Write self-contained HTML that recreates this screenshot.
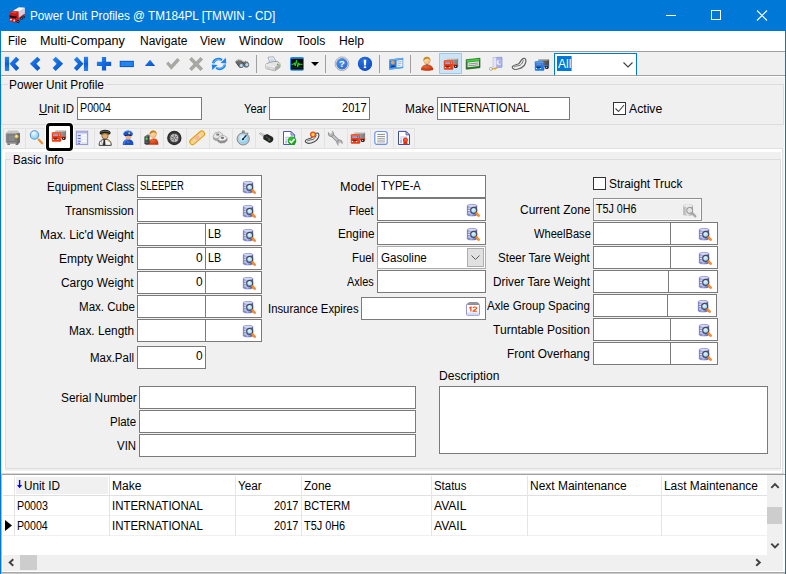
<!DOCTYPE html><html><head><meta charset="utf-8"><title>Power Unit Profiles</title><style>
*{box-sizing:border-box;margin:0;padding:0}
html,body{width:786px;height:574px;overflow:hidden;background:#f0f0f0}
body{font-family:"Liberation Sans",sans-serif;font-size:12px;color:#000;position:relative}
#win{position:absolute;left:0;top:0;width:786px;height:574px;background:#f0f0f0;overflow:hidden}
.abs{position:absolute}
svg{position:absolute;overflow:visible}
.t{position:absolute;white-space:nowrap;line-height:14px;height:14px;transform-origin:0 0}
.in{position:absolute;background:#fff;border:1px solid #7a7a7a}
.dis{position:absolute;background:#f0f0f0;border:1px solid #8e8e8e;box-shadow:inset 0 0 0 1px #fafafa}
.gb{position:absolute;border:1px solid #dcdcdc}
</style></head><body><div id="win">
<svg width="0" height="0" style="position:absolute"><defs>
<linearGradient id="gb" x1="0" y1="0" x2="1" y2="1"><stop offset="0" stop-color="#2f8cf2"/><stop offset=".5" stop-color="#1268dc"/><stop offset="1" stop-color="#0a4fb8"/></linearGradient>
<linearGradient id="gbv" x1="0" y1="0" x2="0" y2="1"><stop offset="0" stop-color="#2a86ee"/><stop offset=".5" stop-color="#0d5fd4"/><stop offset="1" stop-color="#2a86ee"/></linearGradient>
<linearGradient id="gcyl" x1="0" y1="0" x2="1" y2="0"><stop offset="0" stop-color="#5c66b4"/><stop offset=".4" stop-color="#b8c0ea"/><stop offset="1" stop-color="#3e4898"/></linearGradient>
<linearGradient id="gcyd" x1="0" y1="0" x2="1" y2="0"><stop offset="0" stop-color="#acacac"/><stop offset=".45" stop-color="#e4e4e4"/><stop offset="1" stop-color="#9c9c9c"/></linearGradient>
<linearGradient id="gbox" x1="0" y1="0" x2="1" y2="0"><stop offset="0" stop-color="#b8b8b8"/><stop offset="1" stop-color="#7c7c7c"/></linearGradient>
<linearGradient id="gboxd" x1="0" y1="0" x2="1" y2="0"><stop offset="0" stop-color="#8a8a8a"/><stop offset="1" stop-color="#444"/></linearGradient>
<radialGradient id="glens" cx=".4" cy=".35" r=".7"><stop offset="0" stop-color="#e8f8ff"/><stop offset="1" stop-color="#7cc8f4"/></radialGradient>
<radialGradient id="gred" cx=".4" cy=".3" r=".8"><stop offset="0" stop-color="#f0682c"/><stop offset="1" stop-color="#b82c0c"/></radialGradient>
<radialGradient id="gblu" cx=".4" cy=".3" r=".8"><stop offset="0" stop-color="#4a90f0"/><stop offset="1" stop-color="#0c3cb0"/></radialGradient>
<radialGradient id="gface" cx=".4" cy=".4" r=".7"><stop offset="0" stop-color="#fde0b0"/><stop offset="1" stop-color="#e8a868"/></radialGradient>

<g id="n-first"><path d="M.9 .8h4.200v14.200h-4.200z" fill="url(#gbv)"/><path d="M12.100 .7l3.100 3.100l-4 4l4 4.100l-3.100 3.100l-6.600-7.200z" fill="url(#gb)"/></g>
<g id="n-prev"><path d="M10.300 .7l3.100 3.100l-4 4l4 4.100l-3.100 3.100l-7.400-7.200z" fill="url(#gb)"/></g>
<g id="n-next"><path d="M5.700 .7l-3.100 3.100l4 4l-4 4.100l3.100 3.100l7.400-7.200z" fill="url(#gb)"/></g>
<g id="n-last"><path d="M10.900 .8h4.200v14.200h-4.200z" fill="url(#gbv)"/><path d="M3.900 .7l-3.100 3.100l4 4l-4 4.100l3.100 3.100l6.600-7.200z" fill="url(#gb)"/></g>
<g id="n-plus"><path d="M5.900 1h4.200v4.700h5.100v4.200h-5.100v4.700h-4.200v-4.700h-5v-4.200h5z" fill="url(#gb)"/></g>
<g id="n-minus"><path d="M.7 4.800h14.200v6.300h-14.200z" fill="#0d58c8"/><path d="M1.700 5.800h12.200v4.300h-12.200z" fill="#2484ee"/></g>
<g id="n-up"><path d="M8 3.700l5.200 6.200h-10.400z" fill="url(#gb)"/></g>
<g id="n-check"><path d="M1.100 7.700l2.300-2.200l2.700 3.300l6.200-6.900l2.700 2.400l-8.700 9.500z" fill="#a9a7a3"/></g>
<g id="n-x"><path d="M1.100 3.600l2.600-2.600l4.400 4.400l4.400-4.400l2.600 2.600l-4.400 4.400l4.400 4.400l-2.600 2.500l-4.400-4.300l-4.400 4.300l-2.600-2.500l4.400-4.400z" fill="#a9a7a3"/></g>
<g id="n-refresh"><path d="M2.300 7.400c.3-3.300 4.600-6 8.600-3.300" stroke="#1c84ee" stroke-width="2.500" fill="none"/><path d="M9.600 6.900l5.700.5l-.5-5.600z" fill="#1c84ee"/><path d="M13.800 8.500c-.3 3.300-4.600 6-8.600 3.300" stroke="#1c84ee" stroke-width="2.500" fill="none"/><path d="M6.500 9l-5.700-.5l.5 5.600z" fill="#1c84ee"/><path d="M2.800 6.600c.8-2.400 4.300-4 7.300-2.200M13.300 9.300c-.8 2.400-4.300 4-7.300 2.200" stroke="#86c8fc" stroke-width=".9" fill="none"/></g>
<g id="n-binoc"><path d="M1.200 5.400l2.700-2l3.700.5l1.300 1.400l2.800-.6l2.300 1.200l1.200 3.700l-1.600 2l-2.800-.2l-1.300-1.400l-1 1.800l-2.600.2l-1.900-1.700z" fill="#6c6c6c"/><path d="M2.400 5l2-1.200l3.200.5l1.200 1.500l2.700-.6l1.800.9" stroke="#c4c4c4" stroke-width=".9" fill="none"/><path d="M2 6.500l3.300 3.600M7.500 5.500l3 3.200" stroke="#3c3c3c" stroke-width=".8"/><circle cx="7.300" cy="9.500" r="2" fill="#b4dcfa" stroke="#4a4a4a" stroke-width=".6"/><circle cx="12.800" cy="8.700" r="2" fill="#b4dcfa" stroke="#4a4a4a" stroke-width=".6"/></g>

<g id="i-truckred"><path d="M4 4.200l1.200-1.200h9l.9.700v5.800h-11.100z" fill="url(#gbox)"/><path d="M4 4.200l1.200-1.200h9l.9.700l-1 .700h-9z" fill="#d4d4d4"/><path d="M10 9.200h5.100v1.600l-1 .5h-4.100z" fill="#e03018"/><ellipse cx="12.800" cy="11.500" rx="1.900" ry="1.500" fill="#1c1010"/><ellipse cx="12.600" cy="11.300" rx=".8" ry=".6" fill="#d8d8d8"/><path d="M8.500 12.200h1.800v1.400l-.6.600h-1.200z" fill="#221410"/><path d="M.8 6.300l.9-1.200h7.300l.9 1.200v7.600l-.7.800h-7.700l-.7-.8z" fill="#e8401c"/><path d="M1.200 5.900l.6-.7h7l.7.700v1h-8.300z" fill="#f2643a"/><path d="M2.200 7.200h4.900v1.800h-4.900zM8 7.200h1.100v1.800h-1.100z" fill="#8ea8e4"/><path d="M2.600 10.800h4v1h-4z" fill="#5a1a10"/><path d="M1.800 12.100h1.300v.9h-1.300zM5.900 12.100h1.300v.9h-1.300z" fill="#fff4ec"/></g>
<g id="i-truckblue"><path d="M4 4.200l1.200-1.200h9l.9.700v5.800h-11.100z" fill="url(#gboxd)"/><path d="M4 4.200l1.200-1.200h9l.9.700l-1 .700h-9z" fill="#b0b0b0"/><path d="M10 9.200h5.100v1.600l-1 .5h-4.100z" fill="#1668d8"/><ellipse cx="12.800" cy="11.500" rx="1.900" ry="1.500" fill="#1c1010"/><ellipse cx="12.600" cy="11.300" rx=".8" ry=".6" fill="#d8d8d8"/><path d="M8.500 12.200h1.800v1.400l-.6.600h-1.200z" fill="#221410"/><path d="M.8 6.300l.9-1.200h7.300l.9 1.200v7.600l-.7.800h-7.700l-.7-.8z" fill="#1c7ce8"/><path d="M1.200 5.900l.6-.7h7l.7.700v1h-8.300z" fill="#4aa0f4"/><path d="M2.200 7.200h4.900v1.800h-4.900zM8 7.200h1.100v1.800h-1.100z" fill="#7484c4"/><path d="M2.600 10.800h4v1h-4z" fill="#0c1420"/><path d="M1.800 12.100h1.300v.9h-1.300zM5.900 12.100h1.300v.9h-1.300z" fill="#d8f0ff"/></g>
<g id="i-trucktitle"><path d="M4.200 3.800l5.500-3.300l6 .3v6.500l-6.500 5z" fill="#dcdce8"/><path d="M4.200 3.800l5.500-3.300l6 .3l-5.500 3.500z" fill="#fafafa"/><path d="M10.200 4.300l5.500-3.500v6.500l-5.500 4.200z" fill="#cfcfe0"/><path d="M9.500 11l6.200-4.600v1.500l-6.200 4.700z" fill="#c41c1c"/><path d="M.3 8.500l1-3.300l3.300-1.400l5 .6l.2 7.500l-2.800 3.800l-5.500-1.200l-1.200-2.500z" fill="#d01a1a"/><path d="M1.600 5.600l3-1.300l4 .5l-2.600 1.600z" fill="#ee4a3a"/><path d="M.6 8.300l5.800 1.300l1-1l.2 1.800l-1.200 1.200l-6-1.400z" fill="#141414"/><circle cx="2" cy="12.600" r=".9" fill="#fff"/><circle cx="5.200" cy="13.500" r=".9" fill="#f4f4ff"/><circle cx="9" cy="14.500" r="1.500" fill="#141414"/><circle cx="12.500" cy="11.500" r="1.300" fill="#141414"/><circle cx="14.600" cy="10" r="1.200" fill="#141414"/><circle cx="9" cy="14.500" r=".5" fill="#ddd"/><circle cx="12.500" cy="11.500" r=".45" fill="#ddd"/><circle cx="14.600" cy="10" r=".4" fill="#ddd"/></g>
<g id="i-printer"><path d="M3 1.200l5.500-.4l2.800 5.200l-6.300 1z" fill="#f4f8fc" stroke="#8a9098" stroke-width=".7"/><path d="M4.600 2.600l3.500-.3l1.500 2.800l-3.800.5z" fill="#c4dcf2"/><path d="M1 8.200l3.500-2l7.500-1l3 2.300v3.800l-5 3.500l-9-2.300z" fill="#e4e4e4" stroke="#7c7c7c" stroke-width=".7"/><path d="M1 8.200l9 2.300l5-3v3.800l-5 3.500z" fill="#acacac"/><path d="M1 8.200l9 2.300v4.300l-9-2.300z" fill="#e8e8e8"/><path d="M2 10.800l7.200 1.800v1.400l-7.200-1.800z" fill="#fdfdfd" stroke="#9c9c9c" stroke-width=".5"/><path d="M1 8.200l9 2.300l5-3" stroke="#fafafa" stroke-width=".6" fill="none"/><circle cx="12.800" cy="8.400" r=".9" fill="#38c838"/></g>
<g id="i-monitor"><rect x="1" y=".9" width="14" height="13.800" rx="1.800" fill="#1e8cf8"/><rect x="2" y="2.800" width="12" height="10.700" fill="#040c04"/><path d="M2.500 8.300h2l.8-1.500l.9 3l1.200-5.500l1.300 6.500l1.100-4l.9 2.200l.8-.7h2" stroke="#30e030" stroke-width="1" fill="none"/><path d="M3 11.500h10" stroke="#124812" stroke-width=".6"/></g>
<g id="i-help"><circle cx="8" cy="7.800" r="6.900" fill="#d8dade" stroke="#8c8c90" stroke-width=".6"/><circle cx="8" cy="7.800" r="5.500" fill="url(#gblu)"/><circle cx="8" cy="7.800" r="5.500" fill="#4a96ec" opacity=".55"/><text x="8" y="11.200" font-family="Liberation Sans" font-weight="bold" font-size="9.500" text-anchor="middle" fill="#fff">?</text></g>
<g id="i-info"><circle cx="8" cy="7.800" r="7.100" fill="url(#gblu)"/><circle cx="8" cy="7.800" r="7.100" fill="#0c56d0" opacity=".5"/><path d="M6.700 3.700h2.600l-.45 5.800h-1.700z" fill="#fff"/><ellipse cx="8" cy="11.300" rx="1.350" ry="1.050" fill="#fff"/></g>
<g id="i-card"><path d="M1.200 3.600l14-1.900v10.400l-14 1.700z" fill="#2c80e8"/><path d="M1.200 3.600l14-1.900v1.500l-14 1.900z" fill="#68acf6"/><path d="M8.600 4.500l6-.8v7.200l-6 .8z" fill="#f0f2f6"/><path d="M9.500 6l4.200-.5M9.500 7.800l4.200-.5M9.500 9.600l3-.4" stroke="#a8acb8" stroke-width=".8"/><circle cx="4.800" cy="6.600" r="1.900" fill="#f0a040"/><path d="M2.300 11.600c.2-3 4.800-3.300 5.200-.5z" fill="#1c3c98"/><path d="M1.200 12.300l14-1.700v1.500l-14 1.700z" fill="#58a4f4"/></g>
<g id="i-person"><path d="M2 14c-.5-7.500 12.700-7.500 12.200 0c-3 .9-9 .9-12.200 0z" fill="url(#gred)"/><circle cx="7.900" cy="4.700" r="3.500" fill="url(#gface)"/><path d="M4.300 5c-.6-5.600 7.800-5.600 7.200 0c-.6-1.600-1.400-2.300-2.600-2.500c-1.800.5-3.600.6-4.600 2.500z" fill="#c4861c"/><path d="M6.900 8.200h2.200l-.5 1.800h-1.200z" fill="#56688c"/></g>
<g id="i-ticket"><path d="M1.200 3.700l13.800-1.400v9.400l-13.800 1.500z" fill="#1c8c1c" stroke="#1c3c1c" stroke-width=".6"/><path d="M1.700 4l12.800-1.300v1.900l-12.800 1.300z" fill="#38d838"/><path d="M2.600 6.500l11.300-1.200v4.800l-11.300 1.200z" fill="#ececec"/><path d="M3.400 8l9.700-1M3.400 9.800l9.700-1" stroke="#8c8c8c" stroke-width="1"/></g>
<g id="i-dockey"><path d="M5.200 1.600l8.800-.4v10l-8.800.8z" fill="#aab0e8" stroke="#8288cc" stroke-width=".6"/><path d="M5.200 1.600l3-.1v10.200l-3 .3z" fill="#e4e6f8"/><circle cx="11" cy="6.500" r="2.400" fill="#f0f2fc"/><circle cx="12" cy="6.100" r="1.800" fill="#aab0e8"/><path d="M3.500 12.400l5.800-1l.3 1l-1.600.4l.2.700l-1.300.3l-.2-.6l-2.800.6z" fill="#f0a800"/><circle cx="2.900" cy="12.900" r="1.500" fill="#f4f4f4" stroke="#9a9a9a" stroke-width=".7"/></g>
<g id="i-clip"><path d="M2 12.600c-2.500-2.600 2-3.600 5.200-4.600c2-.7 2.300-4.300 4.800-5.400c3-1.200 3.400 2 2.400 4.600c-1 2.800-3.500 4.600-6.400 5.600c-2.400.8-4.800 1-6-.2z" fill="#f0f0f0" stroke="#606060" stroke-width="1.200"/><path d="M3.200 11c1.500-1.300 4.500-1 6-1.800c1.600-.9 2.600-3.300 3.100-5" stroke="#6a6a6a" stroke-width="1" fill="none"/></g>

<g id="i-safe"><path d="M.8 4.200l2.600-2.600h9.400l2.200 2.600z" fill="#c4c4c4"/><path d="M.8 4.200h14.200v9l-1.600 1.600h-11l-1.600-1.600z" fill="#8c8c8c"/><path d="M11.500 4.200h3.500v9l-1.600 1.600h-1.900z" fill="#6c6c6c"/><path d="M2.600 5.500h8v7.500h-8z" fill="#707070"/><path d="M3.400 6.300h6.400v5.900h-6.400z" fill="#8a8a8a"/><circle cx="11.600" cy="7.400" r="1.900" fill="#f0c030"/><circle cx="11.400" cy="7.200" r=".9" fill="#fff0a0"/><path d="M2.400 14.800h2.600v1h-2.600zM10.600 14.800h2.600v1h-2.600z" fill="#4a4a4a"/></g>
<g id="i-mag"><circle cx="6.500" cy="6" r="4.200" fill="url(#glens)" stroke="#5c98cc" stroke-width="1.100"/><path d="M4.300 4.300c.9-1.200 2.300-1.400 3.300-.9" stroke="#fff" stroke-width=".9" fill="none"/><path d="M9.600 9.300l1.500 1.500" stroke="#8c8c8c" stroke-width="1.600"/><path d="M10.700 10.400l3.400 3.800" stroke="#dcdcdc" stroke-width="3" stroke-linecap="round"/><path d="M11 10.800l3 3.400" stroke="#f08a1c" stroke-width="2" stroke-linecap="round"/></g>
<g id="i-form"><rect x="2.300" y="2.200" width="11.400" height="13.400" fill="#dfe2f8" stroke="#8a8ccc" stroke-width=".9"/><path d="M2.800 2.700h10.400v1.500h-10.400z" fill="#b0b4e4"/><path d="M7.400 5.600h5.300v1.800h-5.300zM7.400 8.400h5.300v1.800h-5.300zM7.400 11.200h5.300v1.800h-5.300z" fill="#fdfdff"/><path d="M3.800 6.600h2.900M3.800 9.400h2.900M3.800 12.200h2.900M3.800 14.300h2.200" stroke="#4454b4" stroke-width=".9"/></g>
<g id="i-pilot"><path d="M2.200 16.400c-.3-4.500 2.500-6 6-6c3.500 0 6.300 1.500 6 6z" fill="#f6f6f6" stroke="#2e2e2e" stroke-width=".9"/><path d="M6.600 10.600h1.500l.4 5.600h-2.600z" fill="#2a2a2a"/><path d="M4.300 12l1.300 4" stroke="#8a8a8a" stroke-width=".7"/><path d="M11 10.900l2.400 1.500l-.5 1.100l-2.400-1.400z" fill="#e8b020"/><circle cx="8" cy="6.800" r="3.200" fill="#e0ac74" stroke="#5a3a1a" stroke-width=".6"/><path d="M2.600 3.700c.6-3.800 10.400-3.800 11 0c.2 1-1 1.600-1.800 2c-2.400-.9-5-.9-7.400 0c-.8-.4-2-1-1.800-2z" fill="#1c1c1c"/><path d="M3.400 3.200c2.600-1.400 6.600-1.400 9.200 0" stroke="#8c8c8c" stroke-width=".7" fill="none"/><path d="M4.600 5.200c2.200-.8 4.800-.8 7 0" stroke="#d8a820" stroke-width=".8" fill="none"/></g>
<g id="i-police"><path d="M2.800 16c-.3-4.500 2.200-5.800 5.300-5.800c3.100 0 5.600 1.300 5.300 5.800z" fill="#1c50c8"/><path d="M4 15.500c0-3 1.500-4.300 3.600-4.600" stroke="#4c84ec" stroke-width="1.200" fill="none"/><circle cx="8.300" cy="7.400" r="3" fill="#e8b080"/><path d="M3.400 5.400c-.5-4.800 9.900-4.800 9.400 0c-.1.900-1 1.400-1.500 1.500c-2.200-1-4.400-1-6.400 0c-.5-.1-1.400-.6-1.500-1.500z" fill="#1c54d0"/><path d="M4.200 3.300c1.800-1.800 6-1.800 7.800 0" stroke="#5c94f0" stroke-width="1" fill="none"/><path d="M5 6.700c2-.9 4.600-.9 6.400 0" stroke="#0c1c58" stroke-width="1.100" fill="none"/><circle cx="9.200" cy="4.200" r="1" fill="#f0d040"/><circle cx="8" cy="13" r=".6" fill="#f0d040"/></g>
<g id="i-phone"><path d="M5.200 15.800c-.3-5 3.500-6.200 5.800-6.200c2.400 0 4.600 1.700 4.300 6.200z" fill="url(#gred)"/><circle cx="10.200" cy="5.600" r="3.400" fill="url(#gface)"/><path d="M6.600 5.800c-.8-5.800 8-5.800 7.200 0c-.6-1.500-1.200-2.400-2.300-2.600c-1.900.5-3.700.6-4.900 2.600z" fill="#c4821c"/><path d="M1.400 7.800l3.600-2.200l1.600 1v8.200l-2.400 1.200l-2.800-1z" fill="#3e4048"/><path d="M1.400 7.800l3.600-2.200l1.600 1l-3.400 2z" fill="#6c6e78"/><circle cx="3.600" cy="9.800" r="1.200" fill="#48dc3c"/><path d="M2.300 12h2.600M2.300 13.500h2.600" stroke="#6c6e78" stroke-width=".7"/></g>
<g id="i-tire"><circle cx="8.300" cy="9" r="7.200" fill="#2c2c2c"/><circle cx="8.300" cy="9" r="5.600" fill="#444"/><circle cx="8.300" cy="9" r="4" fill="#c4c4c4"/><path d="M8.300 5.400v7.200M4.900 7.900l6.800 2.200M5.400 11l5.800-4" stroke="#5a5a5a" stroke-width=".9"/><circle cx="8.300" cy="9" r="1.100" fill="#ececec" stroke="#5a5a5a" stroke-width=".5"/></g>
<g id="i-bandaid"><g transform="translate(8.200 8.800) rotate(-41)"><rect x="-8.800" y="-2.700" width="17.600" height="5.400" rx="2.700" fill="#f8dca4" stroke="#e0a010" stroke-width="1.200"/><rect x="-2.600" y="-2.100" width="5.200" height="4.200" fill="#f2b8a0"/><path d="M-7 -1h3M-7 1h3M4 -1h3M4 1h3" stroke="#e8b44c" stroke-width=".6"/></g></g>
<g id="i-nuts"><path d="M1 7.400l2.200-3.600l4.400-.9l3 2.200v2.800l-2.400 2.800l-4.400.6z" fill="#e8e8e8" stroke="#8c8c8c" stroke-width=".6"/><path d="M1 7.400l2.800 1.900l4.400-.6l2.400-2.800v2.800l-2.400 2.800l-4.400.6l-2.800-1.900z" fill="#a8a8a8"/><ellipse cx="5.800" cy="5.600" rx="1.700" ry="1.100" fill="#7c7c7c"/><path d="M5.800 10.200l2-3l4.400-.6l2.900 2v2.800l-2.300 2.300l-4.400.4l-2.600-1.500z" fill="#efefef" stroke="#8c8c8c" stroke-width=".6"/><path d="M5.800 10.200l2.600 1.500l4.400-.4l2.300-2.300v2.400l-2.300 2.300l-4.400.4l-2.600-1.500z" fill="#8c8c8c"/><ellipse cx="10.400" cy="8.900" rx="1.800" ry="1.100" fill="#7a7a7a"/></g>
<g id="i-stopwatch"><path d="M6.900 1.500h2.800v2.700h-2.800z" fill="#8c8c8c"/><path d="M12 3.200l1.600 1.300l-1 1.200l-1.500-1.300z" fill="#8c8c8c"/><circle cx="8.200" cy="9.900" r="6.100" fill="#c4c8cc" stroke="#70767c" stroke-width=".8"/><circle cx="8.200" cy="9.900" r="4.700" fill="url(#glens)"/><path d="M7.700 10.400l3.300-3.800" stroke="#1c242c" stroke-width="1.300" stroke-linecap="round"/><circle cx="7.900" cy="10.200" r="1" fill="#1c242c"/></g>
<g id="i-key"><path d="M1.200 4.600l1.300-.8l6.500 3.400l-1.200 2.200z" fill="#d8d8d8" stroke="#8a8a8a" stroke-width=".5"/><path d="M5.600 6.400l3.600-1.300l5 2.600c1.700 1.200 1.500 3.700-.4 5.200l-2.200 1.100l-6.400-3.900z" fill="#242424"/><path d="M7.500 7.600l5 2.900" stroke="#6a6a6a" stroke-width=".8"/><circle cx="11" cy="11" r=".8" fill="#30b030"/></g>
<g id="i-doccheck"><path d="M2.500 2.500h7.500l3.600 3.600v9.400h-11.100z" fill="#fff" stroke="#4c5cac" stroke-width="1"/><path d="M10 2.500v3.600h3.600z" fill="#c4ccf0" stroke="#4c5cac" stroke-width=".8"/><path d="M4.200 8.300h5M4.200 10.300h2.500" stroke="#b0b8e8" stroke-width="1"/><path d="M4.200 11.500h2v3h-2z" fill="#b0b8f0"/><circle cx="11" cy="11.800" r="4.300" fill="#18a418"/><circle cx="10.400" cy="10.800" r="3" fill="#3cc43c" opacity=".7"/><path d="M8.500 11.800l1.900 1.900l3.200-3.700" stroke="#fff" stroke-width="1.600" fill="none"/></g>
<g id="i-clipsun"><path d="M2 13.400c-2.500-2.400 2-3.400 5.200-4.400c2-.7 2.300-3.800 4.800-4.800c3-1.100 3.400 1.800 2.400 4.300c-1 2.600-3.500 4.300-6.400 5.200c-2.400.8-4.800.9-6-.3z" fill="#ececec" stroke="#4a4a4a" stroke-width="1.100"/><path d="M3.200 12c1.500-1.200 4.500-.9 6-1.700c1.600-.8 2.600-3 3.100-4.600" stroke="#5a5a5a" stroke-width="1" fill="none"/><circle cx="9" cy="5.500" r="3" fill="#f04820"/><circle cx="9" cy="5.500" r="1.700" fill="#fcd838"/></g>
<g id="i-wrench"><path d="M4.500 5.500l7.500 7.500" stroke="#8a8a8a" stroke-width="3.400" stroke-linecap="round"/><path d="M4.500 5.500l7.500 7.500" stroke="#c4c4c4" stroke-width="2" stroke-linecap="round"/><circle cx="4" cy="4.800" r="2.700" fill="#b8b8b8" stroke="#808080" stroke-width=".7"/><path d="M.5 2.300l3.200 2.800l1.800-2.200l-2.500-2.900z" fill="#f0f0f0"/><circle cx="12.600" cy="13.600" r="2.700" fill="#b8b8b8" stroke="#808080" stroke-width=".7"/><path d="M16.200 16l-3.200-2.800l-1.800 2.200l2.500 2.900z" fill="#f0f0f0"/></g>
<g id="i-lines"><rect x="1.800" y="2.500" width="12.400" height="12.900" rx="2.200" fill="#fff" stroke="#6c90e4" stroke-width="1.200"/><path d="M4.200 5.400h7.800M4.200 7.600h7.800M4.200 9.800h7.800M4.200 12h7.800" stroke="#707070" stroke-width=".8"/><path d="M4.200 13.800h7.800" stroke="#9a9a9a" stroke-width=".6"/></g>
<g id="i-docribbon"><path d="M2.500 2.400h7.500l3.500 3.500v9.600h-11z" fill="#fff" stroke="#3c4c98" stroke-width="1"/><path d="M10 2.400v3.500h3.500z" fill="#c4ccf0" stroke="#3c4c98" stroke-width=".8"/><path d="M4.200 8h7M4.200 9.800h2" stroke="#b0b8e8" stroke-width=".9"/><path d="M4.200 10.800h1.800v3.400h-1.800z" fill="#b0b8f0"/><path d="M7.800 12.300l-.9 3.700l2.500-1.200l2.500 1.200l-.9-3.700z" fill="#e02c0c"/><circle cx="9.400" cy="10.900" r="2.500" fill="#ea340e"/><circle cx="9.400" cy="10.900" r="1.100" fill="#f8684c"/></g>

<g id="i-look"><path d="M.3 1.700c0-1.700 9.600-1.700 9.600 0v9c0 1.700-9.600 1.700-9.600 0z" fill="url(#gcyl)"/><path d="M.3 1.700c0-1.700 9.600-1.700 9.600 0v9c0 1.700-9.600 1.700-9.600 0z" fill="none" stroke="#5c64b0" stroke-width=".5"/><ellipse cx="5.100" cy="1.800" rx="4.500" ry="1.100" fill="#d4d8f4"/><path d="M.9 4.200h2M.9 6.600h2M.9 9h2" stroke="#eef0fc" stroke-width="1"/><circle cx="6.700" cy="6.400" r="3" fill="url(#glens)" stroke="#484a58" stroke-width="1.100"/><path d="M9.400 9.300l2.300 2.400" stroke="#f07a18" stroke-width="2.500" stroke-linecap="round"/><path d="M9.900 9.500l2.100 2.200" stroke="#fcc878" stroke-width=".7"/></g>
<g id="i-lookdis"><path d="M.3 1.600c0-1.700 9.600-1.700 9.600 0v9c0 1.700-9.600 1.700-9.600 0z" fill="url(#gcyd)"/><ellipse cx="5.100" cy="1.700" rx="4.600" ry="1.200" fill="#ececec"/><circle cx="6.700" cy="6.400" r="3" fill="#e4e4e4" stroke="#909090" stroke-width="1"/><path d="M9.300 9.200l3 3.100" stroke="#a8a8a8" stroke-width="2.400" stroke-linecap="round"/></g>
<g id="i-cal"><rect x=".5" y="2" width="13" height="11.300" rx=".8" fill="#fff" stroke="#9898d4" stroke-width="1"/><path d="M1.200 10.600h11.600v2.200h-11.600z" fill="#c4d2f2"/><path d="M2.500 11.700h9" stroke="#e8eefc" stroke-width="1" stroke-dasharray="1.500 1"/><path d="M1.500 1.600l1.500-1.400h8.500l1.300 1.400v1.200h-11.300z" fill="#6c6c74"/><path d="M3 2.300v-1.500M5 2.300v-1.500M7 2.300v-1.500M9 2.300v-1.500M11 2.300v-1.500" stroke="#e4e4ec" stroke-width=".7"/><path d="M3.300 6.300l1.600-1.200v4.300" stroke="#f0440c" stroke-width="1.200" fill="none"/><path d="M7 6c.4-1.300 3.600-1.300 3.600.3c0 1.100-3.400 1.700-3.600 3h3.900" stroke="#f0440c" stroke-width="1.100" fill="none"/></g>
</defs></svg>

<div class="abs" style="left:0px;top:0px;width:786px;height:31px;background:#0078d7;"></div>
<div class="t" style="left:29.54px;top:9.00px;transform:scaleX(0.9778);color:#fff;">Power Unit Profiles @ TM184PL [TMWIN - CD]</div>
<svg style="left:9px;top:7px" width="16" height="16" viewBox="0 0 16 16"><use href="#i-trucktitle"/></svg>
<svg style="left:0;top:0" width="786" height="31" viewBox="0 0 786 31"><g stroke="#fff" stroke-width="1" fill="none" shape-rendering="crispEdges"><path d="M666 15.5h10"/><rect x="711.5" y="10.5" width="9" height="9"/></g><path d="M757 10.5l10 10M767 10.5l-10 10" stroke="#fff" stroke-width="1.1" fill="none"/></svg>
<div class="abs" style="left:1px;top:31px;width:784px;height:20px;background:#fff;"></div>
<div class="t" style="left:7.66px;top:34.00px;transform:scaleX(0.9593);">File</div>
<div class="t" style="left:40.16px;top:34.00px;transform:scaleX(1.0515);">Multi-Company</div>
<div class="t" style="left:139.51px;top:34.00px;transform:scaleX(1.0013);">Navigate</div>
<div class="t" style="left:200.15px;top:34.00px;transform:scaleX(0.9739);">View</div>
<div class="t" style="left:239.05px;top:34.00px;transform:scaleX(1.0266);">Window</div>
<div class="t" style="left:297.13px;top:34.00px;transform:scaleX(1.0069);">Tools</div>
<div class="t" style="left:338.61px;top:34.00px;transform:scaleX(1.0087);">Help</div>
<div class="abs" style="left:1px;top:51px;width:784px;height:1px;background:#a0a0a0;"></div>
<div class="abs" style="left:1px;top:75px;width:784px;height:1px;background:#a0a0a0;"></div>
<div class="abs" style="left:1px;top:76px;width:784px;height:1px;background:#fff;"></div>
<svg style="left:4px;top:56px" width="16" height="16" viewBox="0 0 16 16"><use href="#n-first"/></svg>
<svg style="left:27px;top:56px" width="16" height="16" viewBox="0 0 16 16"><use href="#n-prev"/></svg>
<svg style="left:50px;top:56px" width="16" height="16" viewBox="0 0 16 16"><use href="#n-next"/></svg>
<svg style="left:73px;top:56px" width="16" height="16" viewBox="0 0 16 16"><use href="#n-last"/></svg>
<svg style="left:96px;top:56px" width="16" height="16" viewBox="0 0 16 16"><use href="#n-plus"/></svg>
<svg style="left:119px;top:56px" width="16" height="16" viewBox="0 0 16 16"><use href="#n-minus"/></svg>
<svg style="left:142px;top:56px" width="16" height="16" viewBox="0 0 16 16"><use href="#n-up"/></svg>
<svg style="left:165px;top:56px" width="16" height="16" viewBox="0 0 16 16"><use href="#n-check"/></svg>
<svg style="left:188px;top:56px" width="16" height="16" viewBox="0 0 16 16"><use href="#n-x"/></svg>
<svg style="left:211px;top:56px" width="16" height="16" viewBox="0 0 16 16"><use href="#n-refresh"/></svg>
<svg style="left:234px;top:56px" width="16" height="16" viewBox="0 0 16 16"><use href="#n-binoc"/></svg>
<div class="abs" style="left:256px;top:55px;width:1px;height:18px;background:#a0a0a0;"></div>
<div class="abs" style="left:325px;top:55px;width:1px;height:18px;background:#a0a0a0;"></div>
<div class="abs" style="left:379px;top:55px;width:1px;height:18px;background:#a0a0a0;"></div>
<div class="abs" style="left:410px;top:55px;width:1px;height:18px;background:#a0a0a0;"></div>
<svg style="left:265px;top:56px" width="16" height="16" viewBox="0 0 16 16"><use href="#i-printer"/></svg>
<svg style="left:289px;top:56px" width="16" height="16" viewBox="0 0 16 16"><use href="#i-monitor"/></svg>
<svg style="left:311px;top:62px" width="8" height="4" viewBox="0 0 8 4"><path d="M0 0h8l-4 4z" fill="#000"/></svg>
<svg style="left:334px;top:56px" width="16" height="16" viewBox="0 0 16 16"><use href="#i-help"/></svg>
<svg style="left:357px;top:56px" width="16" height="16" viewBox="0 0 16 16"><use href="#i-info"/></svg>
<svg style="left:388px;top:56px" width="16" height="16" viewBox="0 0 16 16"><use href="#i-card"/></svg>
<svg style="left:419px;top:56px" width="16" height="16" viewBox="0 0 16 16"><use href="#i-person"/></svg>
<div class="abs" style="left:439px;top:53px;width:23px;height:21px;background:#cce4f7;border:1px solid #99c9ef"></div>
<svg style="left:443px;top:55px" width="16" height="16" viewBox="0 0 16 16"><use href="#i-truckred"/></svg>
<svg style="left:465px;top:56px" width="16" height="16" viewBox="0 0 16 16"><use href="#i-ticket"/></svg>
<svg style="left:488px;top:56px" width="16" height="16" viewBox="0 0 16 16"><use href="#i-dockey"/></svg>
<svg style="left:511px;top:56px" width="16" height="16" viewBox="0 0 16 16"><use href="#i-clip"/></svg>
<svg style="left:534px;top:56px" width="16" height="16" viewBox="0 0 16 16"><use href="#i-truckblue"/></svg>
<div class="abs" style="left:554px;top:53px;width:83px;height:22px;background:#fff;border:1px solid #0078d7;border-bottom:none"></div>
<div class="abs" style="left:557px;top:56px;width:14px;height:15px;background:#0078d7;"></div>
<div class="abs" style="left:571px;top:56px;width:1px;height:15px;background:#f08838;"></div>
<div class="t" style="left:557.78px;top:57.00px;transform:scaleX(0.9986);color:#fff;">All</div>
<svg style="left:623px;top:62px" width="10" height="6" viewBox="0 0 10 6"><path d="M0.5 0.5l4.5 4.5l4.5-4.5" stroke="#444" stroke-width="1.2" fill="none"/></svg>
<div class="gb" style="left:1px;top:84px;width:783px;height:41px;"></div>
<div class="abs" style="left:8px;top:78px;width:98px;height:14px;background:#f0f0f0;"></div>
<div class="t" style="left:9.23px;top:78.00px;transform:scaleX(0.9882);">Power Unit Profile</div>
<div class="t" style="left:38.52px;top:102.00px;transform:scaleX(0.9553);"><u>U</u>nit ID</div>
<div class="in" style="left:77px;top:97px;width:125px;height:23px;"></div>
<div class="t" style="left:80.32px;top:101.00px;transform:scaleX(0.8905);">P0004</div>
<div class="t" style="left:243.66px;top:102.00px;transform:scaleX(0.9291);">Year</div>
<div class="in" style="left:269px;top:97px;width:101px;height:23px;"></div>
<div class="t" style="left:341.84px;top:101.00px;transform:scaleX(0.9262);">2017</div>
<div class="t" style="left:404.63px;top:102.00px;transform:scaleX(0.9883);">Make</div>
<div class="in" style="left:437px;top:97px;width:133px;height:23px;"></div>
<div class="t" style="left:440.16px;top:101.00px;transform:scaleX(0.9423);">INTERNATIONAL</div>
<div class="in" style="left:613px;top:102px;width:13px;height:13px;border-color:#333"></div>
<svg style="left:613px;top:102px" width="13" height="13" viewBox="0 0 13 13"><path d="M2.5 6.5l3 3l5.5-6.5" stroke="#444" stroke-width="1.1" fill="none"/></svg>
<div class="t" style="left:629.18px;top:102.00px;transform:scaleX(1.0182);">Active</div>
<div class="abs" style="left:3px;top:128px;width:412px;height:21px;border:1px solid #e2e2e2"></div>
<div class="abs" style="left:25px;top:129px;width:1px;height:19px;background:#e2e2e2;"></div>
<div class="abs" style="left:48px;top:129px;width:1px;height:19px;background:#e2e2e2;"></div>
<div class="abs" style="left:71px;top:129px;width:1px;height:19px;background:#e2e2e2;"></div>
<div class="abs" style="left:94px;top:129px;width:1px;height:19px;background:#e2e2e2;"></div>
<div class="abs" style="left:117px;top:129px;width:1px;height:19px;background:#e2e2e2;"></div>
<div class="abs" style="left:140px;top:129px;width:1px;height:19px;background:#e2e2e2;"></div>
<div class="abs" style="left:163px;top:129px;width:1px;height:19px;background:#e2e2e2;"></div>
<div class="abs" style="left:186px;top:129px;width:1px;height:19px;background:#e2e2e2;"></div>
<div class="abs" style="left:209px;top:129px;width:1px;height:19px;background:#e2e2e2;"></div>
<div class="abs" style="left:232px;top:129px;width:1px;height:19px;background:#e2e2e2;"></div>
<div class="abs" style="left:255px;top:129px;width:1px;height:19px;background:#e2e2e2;"></div>
<div class="abs" style="left:278px;top:129px;width:1px;height:19px;background:#e2e2e2;"></div>
<div class="abs" style="left:301px;top:129px;width:1px;height:19px;background:#e2e2e2;"></div>
<div class="abs" style="left:324px;top:129px;width:1px;height:19px;background:#e2e2e2;"></div>
<div class="abs" style="left:347px;top:129px;width:1px;height:19px;background:#e2e2e2;"></div>
<div class="abs" style="left:370px;top:129px;width:1px;height:19px;background:#e2e2e2;"></div>
<div class="abs" style="left:393px;top:129px;width:1px;height:19px;background:#e2e2e2;"></div>
<div class="abs" style="left:1px;top:148px;width:782px;height:1px;background:#e0e0e0;"></div>
<div class="abs" style="left:2px;top:149px;width:780px;height:3px;background:#fff;"></div>
<div class="abs" style="left:782px;top:148px;width:1px;height:325px;background:#e0e0e0;"></div>
<div class="abs" style="left:781px;top:149px;width:1px;height:323px;background:#fff;"></div>
<div class="abs" style="left:1px;top:148px;width:1px;height:325px;background:#e4e4e4;"></div>
<div class="abs" style="left:2px;top:149px;width:3px;height:324px;background:#fff;"></div>
<div class="abs" style="left:2px;top:471px;width:780px;height:2px;background:#fff;"></div>
<div class="abs" style="left:46px;top:123px;width:27px;height:28px;border:3px solid #000;border-radius:4px;background:#fff;box-shadow:0 0 0 1px #fff"></div>
<svg style="left:5px;top:129px" width="16" height="16" viewBox="0 0 16 16"><use href="#i-safe"/></svg>
<svg style="left:28px;top:129px" width="16" height="16" viewBox="0 0 16 16"><use href="#i-mag"/></svg>
<svg style="left:51px;top:127px" width="16" height="16" viewBox="0 0 16 16"><use href="#i-truckred"/></svg>
<svg style="left:74px;top:129px" width="16" height="16" viewBox="0 0 16 16"><use href="#i-form"/></svg>
<svg style="left:97px;top:129px" width="16" height="16" viewBox="0 0 16 16"><use href="#i-pilot"/></svg>
<svg style="left:120px;top:129px" width="16" height="16" viewBox="0 0 16 16"><use href="#i-police"/></svg>
<svg style="left:143px;top:129px" width="16" height="16" viewBox="0 0 16 16"><use href="#i-phone"/></svg>
<svg style="left:166px;top:129px" width="16" height="16" viewBox="0 0 16 16"><use href="#i-tire"/></svg>
<svg style="left:189px;top:129px" width="16" height="16" viewBox="0 0 16 16"><use href="#i-bandaid"/></svg>
<svg style="left:212px;top:129px" width="16" height="16" viewBox="0 0 16 16"><use href="#i-nuts"/></svg>
<svg style="left:235px;top:129px" width="16" height="16" viewBox="0 0 16 16"><use href="#i-stopwatch"/></svg>
<svg style="left:258px;top:129px" width="16" height="16" viewBox="0 0 16 16"><use href="#i-key"/></svg>
<svg style="left:281px;top:129px" width="16" height="16" viewBox="0 0 16 16"><use href="#i-doccheck"/></svg>
<svg style="left:304px;top:129px" width="16" height="16" viewBox="0 0 16 16"><use href="#i-clipsun"/></svg>
<svg style="left:327px;top:129px" width="16" height="16" viewBox="0 0 16 16"><use href="#i-wrench"/></svg>
<svg style="left:350px;top:129px" width="16" height="16" viewBox="0 0 16 16"><use href="#i-truckred"/></svg>
<svg style="left:373px;top:129px" width="16" height="16" viewBox="0 0 16 16"><use href="#i-lines"/></svg>
<svg style="left:396px;top:129px" width="16" height="16" viewBox="0 0 16 16"><use href="#i-docribbon"/></svg>
<div class="gb" style="left:5px;top:159px;width:776px;height:310px;"></div>
<div class="abs" style="left:11px;top:153px;width:55px;height:14px;background:#f0f0f0;"></div>
<div class="t" style="left:12.95px;top:153.00px;transform:scaleX(0.9632);">Basic Info</div>
<div class="t" style="left:46.55px;top:180.00px;transform:scaleX(0.9654);">Equipment Class</div>
<div class="in" style="left:137px;top:175px;width:125px;height:23px;"></div>
<svg style="left:243px;top:181px" width="14" height="14" viewBox="0 0 14 14"><use href="#i-look"/></svg>
<div class="t" style="left:64.74px;top:204.00px;transform:scaleX(0.9703);">Transmission</div>
<div class="in" style="left:137px;top:199px;width:125px;height:23px;"></div>
<svg style="left:243px;top:205px" width="14" height="14" viewBox="0 0 14 14"><use href="#i-look"/></svg>
<div class="t" style="left:39.62px;top:228.00px;transform:scaleX(0.9976);">Max. Lic'd Weight</div>
<div class="in" style="left:137px;top:223px;width:125px;height:23px;"></div>
<div class="abs" style="left:205px;top:224px;width:1px;height:21px;background:#7a7a7a;"></div>
<svg style="left:243px;top:229px" width="14" height="14" viewBox="0 0 14 14"><use href="#i-look"/></svg>
<div class="t" style="left:59.21px;top:252.00px;transform:scaleX(1.0016);">Empty Weight</div>
<div class="in" style="left:137px;top:247px;width:125px;height:23px;"></div>
<div class="abs" style="left:205px;top:248px;width:1px;height:21px;background:#7a7a7a;"></div>
<svg style="left:243px;top:253px" width="14" height="14" viewBox="0 0 14 14"><use href="#i-look"/></svg>
<div class="t" style="left:61.20px;top:276.00px;transform:scaleX(0.9925);">Cargo Weight</div>
<div class="in" style="left:137px;top:271px;width:125px;height:23px;"></div>
<div class="abs" style="left:205px;top:272px;width:1px;height:21px;background:#7a7a7a;"></div>
<svg style="left:243px;top:277px" width="14" height="14" viewBox="0 0 14 14"><use href="#i-look"/></svg>
<div class="t" style="left:78.65px;top:300.00px;transform:scaleX(0.9629);">Max. Cube</div>
<div class="in" style="left:137px;top:295px;width:125px;height:23px;"></div>
<div class="abs" style="left:205px;top:296px;width:1px;height:21px;background:#7a7a7a;"></div>
<svg style="left:243px;top:301px" width="14" height="14" viewBox="0 0 14 14"><use href="#i-look"/></svg>
<div class="t" style="left:68.53px;top:324.00px;transform:scaleX(0.9852);">Max. Length</div>
<div class="in" style="left:137px;top:319px;width:125px;height:23px;"></div>
<div class="abs" style="left:205px;top:320px;width:1px;height:21px;background:#7a7a7a;"></div>
<svg style="left:243px;top:325px" width="14" height="14" viewBox="0 0 14 14"><use href="#i-look"/></svg>
<div class="t" style="left:139.87px;top:179.00px;transform:scaleX(0.7909);">SLEEPER</div>
<div class="t" style="left:207.82px;top:227.00px;transform:scaleX(0.8962);">LB</div>
<div class="t" style="left:207.82px;top:251.00px;transform:scaleX(0.8962);">LB</div>
<div class="t" style="left:195.53px;top:251.00px;transform:scaleX(0.9940);">0</div>
<div class="t" style="left:195.53px;top:275.00px;transform:scaleX(0.9940);">0</div>
<div class="t" style="left:89.56px;top:351.00px;transform:scaleX(0.9564);">Max.Pall</div>
<div class="in" style="left:137px;top:346px;width:69px;height:23px;"></div>
<div class="t" style="left:195.53px;top:349.00px;transform:scaleX(0.9940);">0</div>
<div class="t" style="left:60.86px;top:391.00px;transform:scaleX(0.9874);">Serial Number</div>
<div class="in" style="left:139px;top:386px;width:277px;height:23px;"></div>
<div class="t" style="left:109.96px;top:415.00px;transform:scaleX(0.9564);">Plate</div>
<div class="in" style="left:139px;top:410px;width:277px;height:23px;"></div>
<div class="t" style="left:117.15px;top:439.00px;transform:scaleX(0.9542);">VIN</div>
<div class="in" style="left:139px;top:434px;width:277px;height:23px;"></div>
<div class="t" style="left:340.27px;top:180.00px;transform:scaleX(1.0485);">Model</div>
<div class="in" style="left:377px;top:175px;width:109px;height:23px;"></div>
<div class="t" style="left:380.55px;top:179.00px;transform:scaleX(0.9155);">TYPE-A</div>
<div class="t" style="left:349.30px;top:204.00px;transform:scaleX(0.9180);">Fleet</div>
<div class="in" style="left:377px;top:198px;width:109px;height:23px;"></div>
<svg style="left:467px;top:204px" width="14" height="14" viewBox="0 0 14 14"><use href="#i-look"/></svg>
<div class="t" style="left:337.64px;top:227.00px;transform:scaleX(0.9793);">Engine</div>
<div class="in" style="left:377px;top:222px;width:109px;height:23px;"></div>
<svg style="left:467px;top:228px" width="14" height="14" viewBox="0 0 14 14"><use href="#i-look"/></svg>
<div class="t" style="left:351.57px;top:251.00px;transform:scaleX(0.9417);">Fuel</div>
<div class="in" style="left:377px;top:246px;width:109px;height:23px;border-color:#adadad"></div>
<div class="abs" style="left:467px;top:248px;width:17px;height:19px;background:#e1e1e1;border:1px solid #adadad"></div>
<svg style="left:471px;top:255px" width="9" height="6" viewBox="0 0 9 6"><path d="M0.5 0.5l4 4l4-4" stroke="#5a5a5a" stroke-width="1" fill="none"/></svg>
<div class="t" style="left:380.72px;top:251.00px;transform:scaleX(0.9671);">Gasoline</div>
<div class="t" style="left:347.48px;top:275.00px;transform:scaleX(0.9139);">Axles</div>
<div class="in" style="left:377px;top:270px;width:109px;height:23px;"></div>
<div class="t" style="left:268.06px;top:302.00px;transform:scaleX(0.9430);">Insurance Expires</div>
<div class="in" style="left:361px;top:297px;width:125px;height:23px;"></div>
<svg style="left:466px;top:302px" width="14" height="14" viewBox="0 0 14 14"><use href="#i-cal"/></svg>
<div class="in" style="left:593px;top:177px;width:13px;height:13px;border-color:#333"></div>
<div class="t" style="left:608.66px;top:177.00px;transform:scaleX(0.9934);">Straight Truck</div>
<div class="t" style="left:519.69px;top:203.00px;transform:scaleX(0.9965);">Current Zone</div>
<div class="dis" style="left:593px;top:198px;width:109px;height:23px;"></div>
<div class="t" style="left:596.36px;top:202.00px;transform:scaleX(0.8912);">T5J 0H6</div>
<svg style="left:683px;top:204px" width="14" height="14" viewBox="0 0 14 14"><use href="#i-lookdis"/></svg>
<div class="t" style="left:533.55px;top:227.00px;transform:scaleX(0.9264);">WheelBase</div>
<div class="in" style="left:593px;top:222px;width:125px;height:23px;"></div>
<div class="abs" style="left:670px;top:223px;width:1px;height:21px;background:#7a7a7a;"></div>
<svg style="left:699px;top:228px" width="14" height="14" viewBox="0 0 14 14"><use href="#i-look"/></svg>
<div class="t" style="left:497.78px;top:251.00px;transform:scaleX(0.9595);">Steer Tare Weight</div>
<div class="in" style="left:593px;top:246px;width:125px;height:23px;"></div>
<div class="abs" style="left:670px;top:247px;width:1px;height:21px;background:#7a7a7a;"></div>
<svg style="left:699px;top:252px" width="14" height="14" viewBox="0 0 14 14"><use href="#i-look"/></svg>
<div class="t" style="left:492.54px;top:275.00px;transform:scaleX(0.9801);">Driver Tare Weight</div>
<div class="in" style="left:593px;top:270px;width:125px;height:23px;"></div>
<div class="abs" style="left:668px;top:271px;width:1px;height:21px;background:#7a7a7a;"></div>
<svg style="left:699px;top:276px" width="14" height="14" viewBox="0 0 14 14"><use href="#i-look"/></svg>
<div class="t" style="left:487.28px;top:299.00px;transform:scaleX(0.9641);">Axle Group Spacing</div>
<div class="in" style="left:593px;top:294px;width:124px;height:23px;"></div>
<div class="abs" style="left:667px;top:295px;width:1px;height:21px;background:#7a7a7a;"></div>
<svg style="left:698px;top:300px" width="14" height="14" viewBox="0 0 14 14"><use href="#i-look"/></svg>
<div class="t" style="left:492.63px;top:323.00px;transform:scaleX(1.0072);">Turntable Position</div>
<div class="in" style="left:593px;top:318px;width:125px;height:23px;"></div>
<div class="abs" style="left:670px;top:319px;width:1px;height:21px;background:#7a7a7a;"></div>
<svg style="left:699px;top:324px" width="14" height="14" viewBox="0 0 14 14"><use href="#i-look"/></svg>
<div class="t" style="left:507.43px;top:347.00px;transform:scaleX(0.9847);">Front Overhang</div>
<div class="in" style="left:593px;top:342px;width:125px;height:23px;"></div>
<div class="abs" style="left:670px;top:343px;width:1px;height:21px;background:#7a7a7a;"></div>
<svg style="left:699px;top:348px" width="14" height="14" viewBox="0 0 14 14"><use href="#i-look"/></svg>
<div class="t" style="left:438.91px;top:369.00px;transform:scaleX(1.0057);">Description</div>
<div class="in" style="left:439px;top:386px;width:329px;height:68px;"></div>
<div class="abs" style="left:1px;top:473px;width:784px;height:1px;background:#d8d8d8;"></div>
<div class="abs" style="left:1px;top:474px;width:784px;height:1px;background:#a0a0a0;"></div>
<div class="abs" style="left:1px;top:475px;width:766px;height:80px;background:#fff;"></div>
<div class="abs" style="left:16px;top:477px;width:92px;height:17px;background:#f0f0f0;"></div>
<div class="abs" style="left:3px;top:495px;width:764px;height:1px;background:#e0e0e0;"></div>
<div class="abs" style="left:3px;top:515px;width:764px;height:1px;background:#f0f0f0;"></div>
<div class="abs" style="left:3px;top:535px;width:764px;height:1px;background:#f0f0f0;"></div>
<div class="abs" style="left:14px;top:476px;width:1px;height:60px;background:#e5e5e5;"></div>
<div class="abs" style="left:109px;top:476px;width:1px;height:60px;background:#e5e5e5;"></div>
<div class="abs" style="left:235px;top:476px;width:1px;height:60px;background:#e5e5e5;"></div>
<div class="abs" style="left:301px;top:476px;width:1px;height:60px;background:#e5e5e5;"></div>
<div class="abs" style="left:431px;top:476px;width:1px;height:60px;background:#e5e5e5;"></div>
<div class="abs" style="left:527px;top:476px;width:1px;height:60px;background:#e5e5e5;"></div>
<div class="abs" style="left:661px;top:476px;width:1px;height:60px;background:#e5e5e5;"></div>
<svg style="left:17px;top:480px" width="6" height="9" viewBox="0 0 6 9"><path d="M2.6 0v7" stroke="#0000ff" stroke-width="1.4"/><path d="M0 5h5.200l-2.600 3.300z" fill="#0000ff"/></svg>
<div class="t" style="left:24.49px;top:479.00px;transform:scaleX(0.9781);">Unit ID</div>
<div class="t" style="left:111.61px;top:479.00px;transform:scaleX(1.0062);">Make</div>
<div class="t" style="left:237.64px;top:479.00px;transform:scaleX(0.9753);">Year</div>
<div class="t" style="left:304.02px;top:479.00px;transform:scaleX(0.9913);">Zone</div>
<div class="t" style="left:434.38px;top:479.00px;transform:scaleX(0.9509);">Status</div>
<div class="t" style="left:529.82px;top:479.00px;transform:scaleX(0.9981);">Next Maintenance</div>
<div class="t" style="left:663.72px;top:479.00px;transform:scaleX(0.9905);">Last Maintenance</div>
<div class="t" style="left:17.32px;top:499.00px;transform:scaleX(0.8922);">P0003</div>
<div class="t" style="left:111.54px;top:499.00px;transform:scaleX(0.9540);">INTERNATIONAL</div>
<div class="t" style="left:273.75px;top:499.00px;transform:scaleX(0.9105);">2017</div>
<div class="t" style="left:303.50px;top:499.00px;transform:scaleX(0.9116);">BCTERM</div>
<div class="t" style="left:433.88px;top:499.00px;transform:scaleX(1.0064);">AVAIL</div>
<div class="t" style="left:17.33px;top:519.00px;transform:scaleX(0.8875);">P0004</div>
<div class="t" style="left:111.54px;top:519.00px;transform:scaleX(0.9540);">INTERNATIONAL</div>
<div class="t" style="left:273.75px;top:519.00px;transform:scaleX(0.9105);">2017</div>
<div class="t" style="left:304.16px;top:519.00px;transform:scaleX(0.9069);">T5J 0H6</div>
<div class="t" style="left:433.88px;top:519.00px;transform:scaleX(1.0064);">AVAIL</div>
<svg style="left:5px;top:520px" width="7" height="11" viewBox="0 0 7 11"><path d="M0 0l7 5.5l-7 5.5z" fill="#000"/></svg>
<div class="abs" style="left:767px;top:475px;width:16px;height:96px;background:#f0f0f0;"></div>
<div class="abs" style="left:3px;top:555px;width:780px;height:16px;background:#f0f0f0;"></div>
<div class="abs" style="left:1px;top:475px;width:2px;height:97px;background:#fff;"></div>
<div class="abs" style="left:783px;top:475px;width:2px;height:97px;background:#fff;"></div>
<div class="abs" style="left:1px;top:571px;width:784px;height:1px;background:#fff;"></div>
<div class="abs" style="left:1px;top:474px;width:1px;height:98px;background:#b8b8b8;"></div>
<div class="abs" style="left:1px;top:572px;width:784px;height:1px;background:#a8a8a8;"></div>
<div class="abs" style="left:1px;top:573px;width:784px;height:1px;background:#c8c8c8;"></div>
<div class="abs" style="left:767px;top:507px;width:15px;height:17px;background:#cdcdcd;"></div>
<div class="abs" style="left:20px;top:555px;width:17px;height:15px;background:#cdcdcd;"></div>
<svg style="left:0;top:0" width="786" height="574" viewBox="0 0 786 574"><g stroke="#404040" stroke-width="1.9" fill="none"><path d="M771.300 487.800l3.700-3.700l3.700 3.700"/><path d="M771.300 543.700l3.700 3.700l3.700-3.700"/><path d="M13.300 559.200l-3.600 3.300l3.600 3.300"/><path d="M756.200 559.200l3.600 3.300l-3.600 3.300"/></g></svg>
<div class="abs" style="left:784px;top:77px;width:1px;height:397px;background:#fafafa;"></div>
<div class="abs" style="left:0px;top:0px;width:1px;height:574px;background:#0078d7;"></div>
<div class="abs" style="left:785px;top:0px;width:1px;height:574px;background:#0078d7;"></div>
</div></body></html>
